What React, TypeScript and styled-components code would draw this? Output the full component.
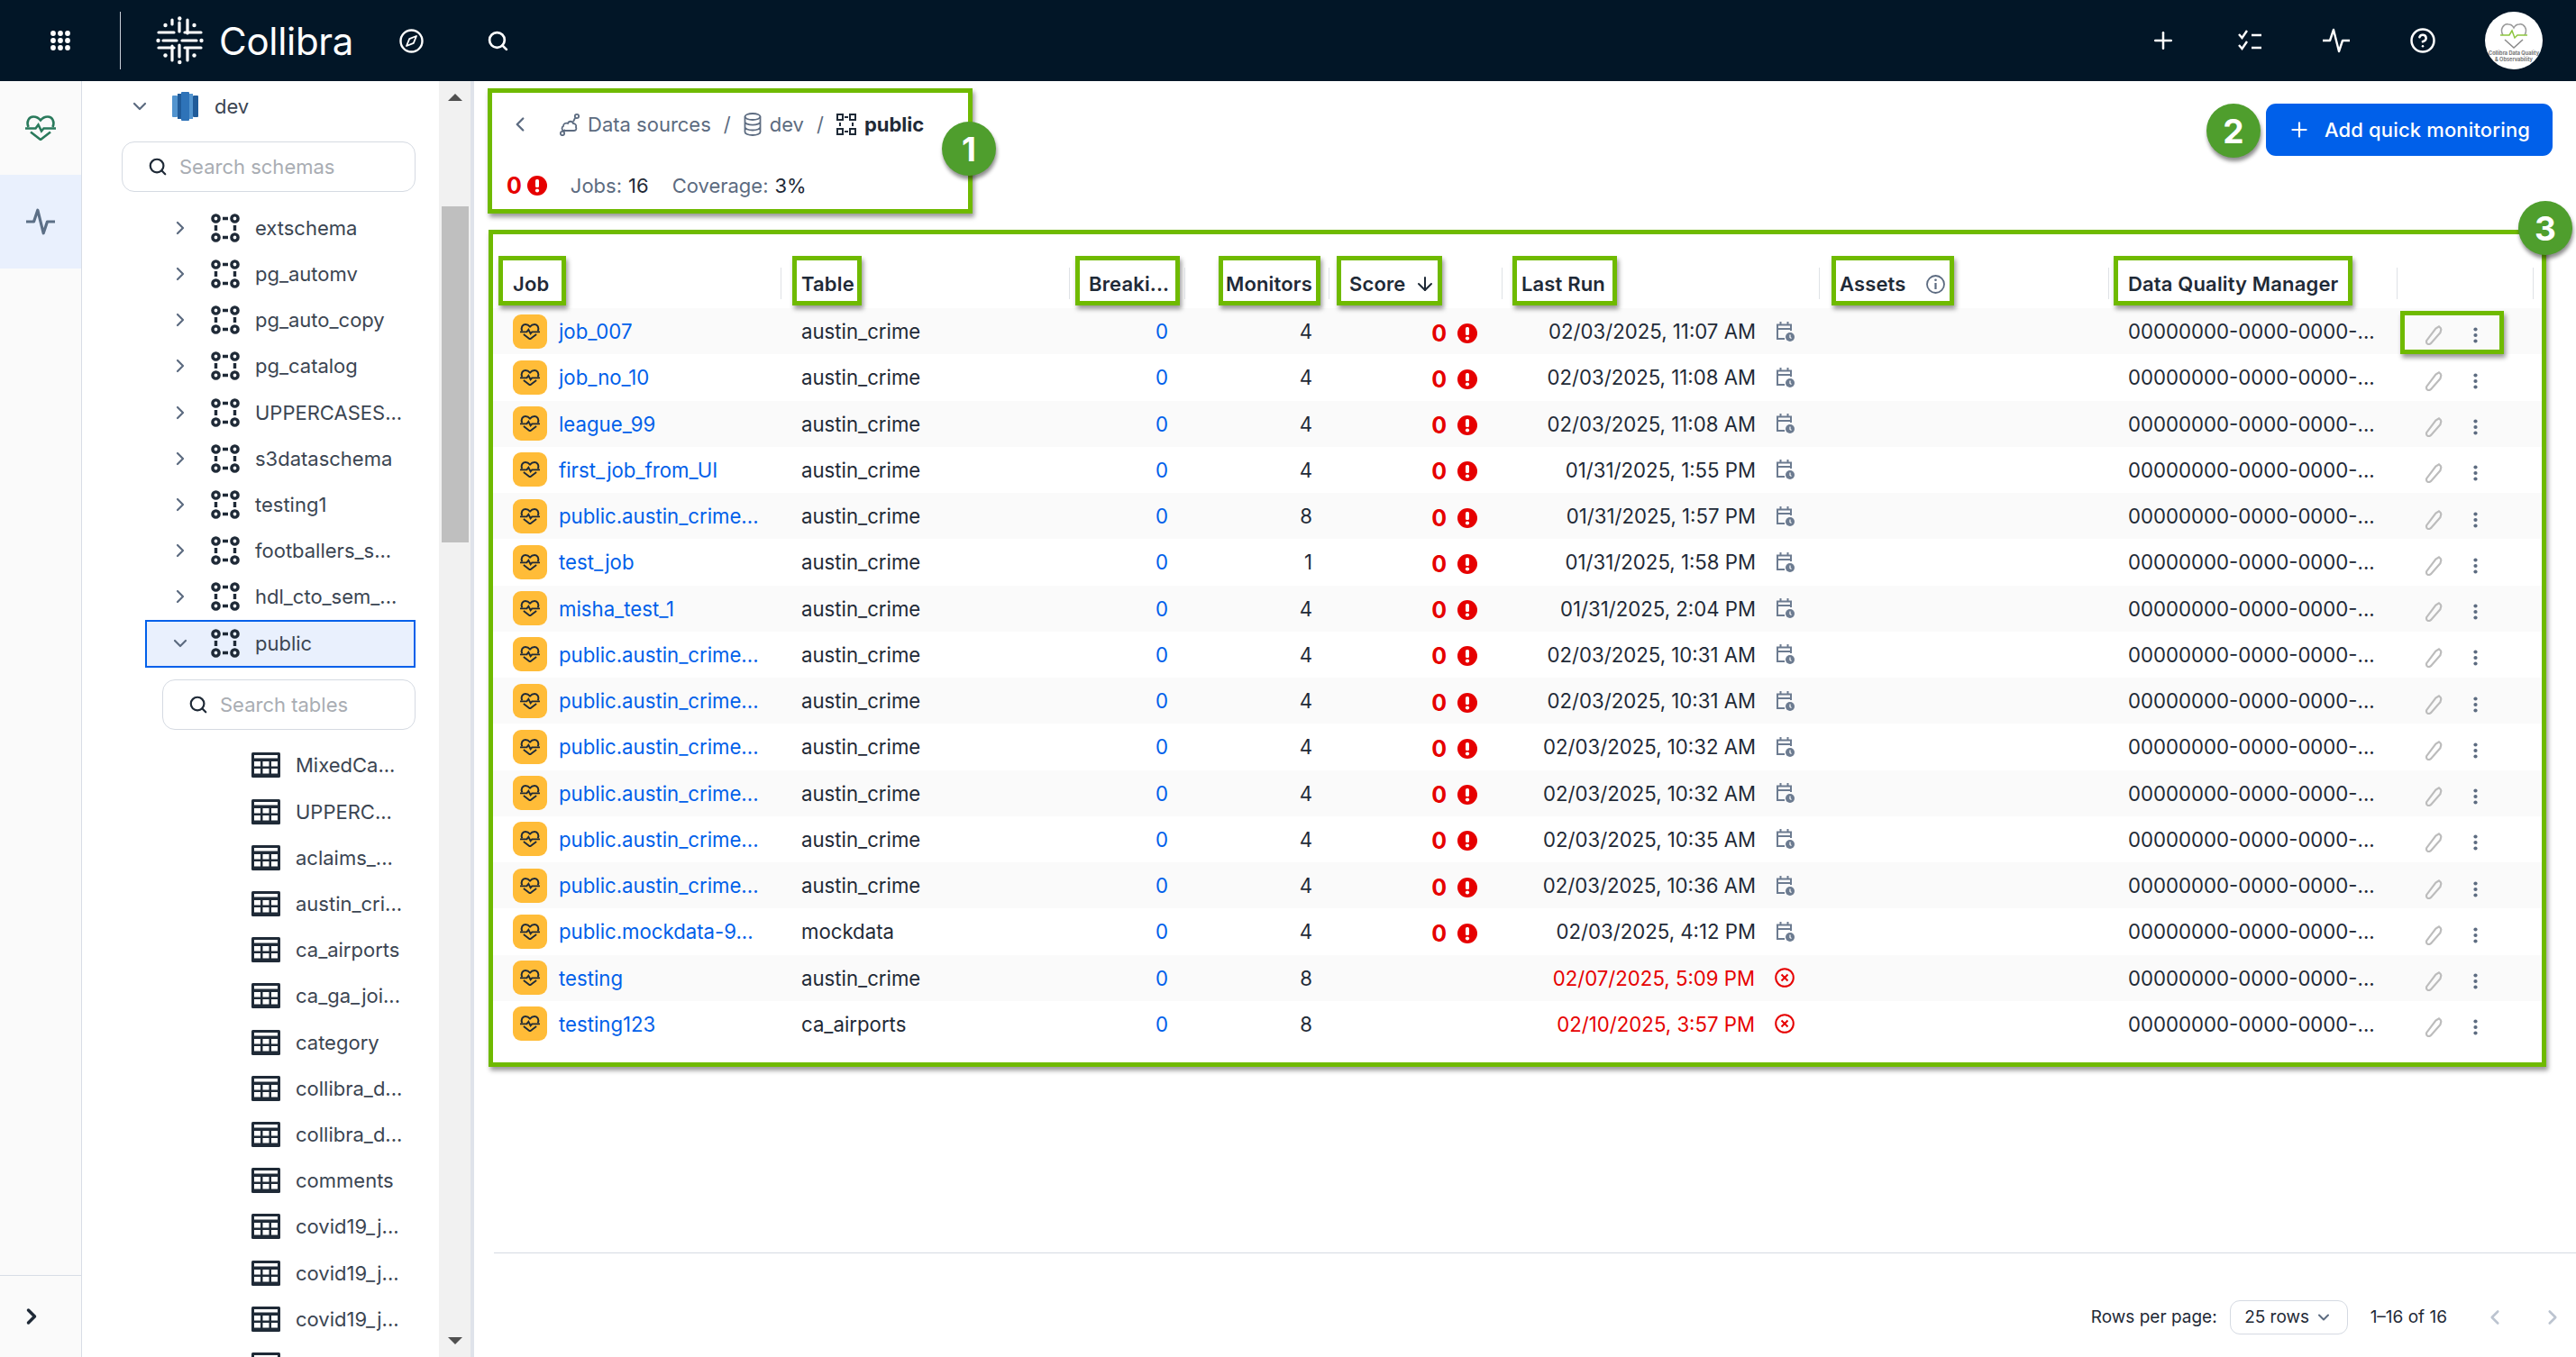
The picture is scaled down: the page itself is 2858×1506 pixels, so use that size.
import React from 'react'
import styled, { createGlobalStyle } from 'styled-components'
import { ChevronDown, ChevronLeft, ChevronRight, Plus, CircleHelp, Search, ArrowDown } from 'lucide-react'

const GREEN = '#6fba00'
const INK = '#1f2a37'
const SLATE = '#5c6b80'
const BLUE = '#0060ea'
const RED = '#e60000'

const GlobalStyle = createGlobalStyle`
  html, body {
    margin: 0;
    padding: 0;
    background: #fff;
  }
  body {
    font-family: Inter, "Liberation Sans", sans-serif;
    font-size: 22px;
    color: ${INK};
  }
  * {
    box-sizing: border-box;
  }
`

const Page = styled.div`
  width: 2858px;
  height: 1506px;
  display: flex;
  flex-direction: column;
  overflow: hidden;
`

const TopBar = styled.header`
  height: 90px;
  flex: none;
  background: #021627;
  color: #fff;
  display: flex;
  align-items: center;
  padding-left: 56px;
  padding-right: 37px;
`

const VDivider = styled.div`
  width: 1px;
  height: 64px;
  background: #c9d0d8;
  margin-left: 55px;
  margin-right: 31px;
`

const Wordmark = styled.span`
  font-size: 42px;
  font-weight: 400;
  margin-left: 8px;
  letter-spacing: -0.3px;
`

const CompassSlot = styled.div`
  margin-left: 51px;
  display: flex;
`

const SearchSlot = styled.div`
  margin-left: 70px;
  display: flex;
`

const TopActions = styled.div`
  margin-left: auto;
  display: flex;
  align-items: center;
`

const TopAction = styled.div`
  width: 96px;
  display: flex;
  justify-content: center;
`

const Avatar = styled.svg`
  margin-left: 21px;
  width: 64px;
  height: 64px;
  display: block;
`

const Body = styled.div`
  flex: 1;
  min-height: 0;
  display: flex;
`

const Rail = styled.nav`
  width: 91px;
  flex: none;
  background: #fafafa;
  border-right: 1px solid #d8dde6;
  display: flex;
  flex-direction: column;
`

const RailItem = styled.div<{ $active?: boolean }>`
  height: 104px;
  display: flex;
  align-items: center;
  justify-content: center;
  color: #2a7a5c;
  background: ${({ $active }) => ($active ? '#e9f0fd' : 'transparent')};
`

const RailFoot = styled.div`
  margin-top: auto;
  height: 91px;
  border-top: 1px solid #d8dde6;
  display: flex;
  align-items: center;
  justify-content: center;
  padding-right: 20px;
  color: ${INK};
`

const TreePanel = styled.aside`
  width: 396px;
  flex: none;
  overflow: hidden;
  padding-top: 2px;
`

const TreeRow = styled.div<{ $indent: number }>`
  height: 51.2px;
  display: flex;
  align-items: center;
  padding-left: ${({ $indent }) => $indent}px;
  font-size: 22px;
  color: #3b4552;
  white-space: nowrap;
`

const SelectedRow = styled.div`
  height: 53px;
  width: 300px;
  margin-left: 70px;
  margin-bottom: -1px;
  padding-left: 17px;
  display: flex;
  align-items: center;
  background: #e9f0fd;
  border: 2px solid ${BLUE};
  font-size: 22px;
  color: #3b4552;
`

const ChevronSlot = styled.span`
  width: 40px;
  margin-right: 14px;
  flex: none;
  display: flex;
  justify-content: center;
  color: ${SLATE};
`

const IconSlot = styled.span`
  width: 32px;
  margin-right: 17px;
  flex: none;
  display: flex;
  justify-content: center;
`

const SearchBox = styled.div<{ $left: number }>`
  height: 56px;
  margin: 14px 26px 14px ${({ $left }) => $left}px;
  border: 1px solid #d5dae2;
  border-radius: 14px;
  display: flex;
  align-items: center;
  padding-left: 28px;
  gap: 13px;
  color: #a9adb3;
  font-size: 22px;
  background: #fff;
  svg {
    color: ${INK};
    flex: none;
  }
`

const ScrollTrack = styled.div`
  width: 35px;
  flex: none;
  background: #f1f1f1;
  display: flex;
  flex-direction: column;
  align-items: center;
`

const ScrollButton = styled.div`
  height: 36px;
  flex: none;
  display: flex;
  align-items: center;
  justify-content: center;
`

const ScrollThumb = styled.div`
  width: 30px;
  height: 373px;
  margin-top: 103px;
  background: #bfbfbf;
`

const ScrollEnd = styled(ScrollButton)`
  margin-top: auto;
`

const Arrow = styled.span<{ $down?: boolean }>`
  width: 0;
  height: 0;
  border-left: 8px solid transparent;
  border-right: 8px solid transparent;
  ${({ $down }) =>
    $down ? 'border-top: 8px solid #505050;' : 'border-bottom: 8px solid #505050;'}
`

const PanelEdge = styled.div`
  width: 4px;
  flex: none;
  background: #dfe3ea;
`

const Main = styled.main`
  flex: 1;
  min-width: 0;
  display: flex;
  flex-direction: column;
`

const HeadRow = styled.div`
  display: flex;
  align-items: flex-start;
  justify-content: space-between;
  padding: 8px 26px 0 15px;
`

const Marked = styled.div`
  position: relative;
  border: 5px solid ${GREEN};
  box-shadow: 2px 4px 5px rgba(0, 0, 0, 0.4);
`

const SummaryBox = styled(Marked)`
  width: 538px;
  height: 139px;
`

const Crumbs = styled.div`
  display: flex;
  align-items: center;
  height: 30px;
  margin-top: 20px;
  padding-left: 18px;
  color: ${SLATE};
  font-size: 22px;
`

const BackSlot = styled.span`
  display: flex;
  margin-right: 31px;
  color: ${SLATE};
`

const CrumbIcon = styled.span`
  display: flex;
  margin-right: 9px;
`

const CrumbSlash = styled.span`
  margin: 0 14px;
`

const CrumbCurrent = styled.span`
  color: ${INK};
  font-weight: 700;
`

const Stats = styled.div`
  display: flex;
  align-items: center;
  height: 30px;
  margin-top: 38px;
  padding-left: 16px;
  font-size: 22px;
`

const ScoreZero = styled.span`
  color: ${RED};
  font-weight: 700;
  font-size: 25px;
  margin-right: 6px;
`

const StatLabel = styled.span<{ $gap: number }>`
  color: ${SLATE};
  margin-left: ${({ $gap }) => $gap}px;
  margin-right: 7px;
`

const Badge = styled.div`
  width: 60px;
  height: 60px;
  border-radius: 50%;
  background: #4f9e2d;
  color: #fff;
  font-size: 37px;
  font-weight: 700;
  display: flex;
  align-items: center;
  justify-content: center;
  box-shadow: 1px 4px 4px rgba(0, 0, 0, 0.45);
`

const OverBadge = styled(Badge)<{ $left: number; $top: number }>`
  position: absolute;
  left: ${({ $left }) => $left}px;
  top: ${({ $top }) => $top}px;
  z-index: 2;
`

const HeadActions = styled.div`
  display: flex;
  align-items: flex-start;
  gap: 6px;
  margin-top: 17px;
`

const PrimaryButton = styled.button`
  width: 318px;
  height: 58px;
  border: 0;
  border-radius: 11px;
  background: ${BLUE};
  color: #fff;
  font-family: inherit;
  font-size: 22px;
  font-weight: 500;
  letter-spacing: 0.15px;
  display: flex;
  align-items: center;
  padding-left: 24px;
  gap: 15px;
`

const TableBox = styled(Marked)`
  width: 2283px;
  height: 929px;
  margin: 18px 0 0 16px;
  padding-top: 22px;
`

const COLUMNS = '319px 320px 128px 160px 192px 352px 321px 320px 152px'

const HeadGrid = styled.div`
  display: grid;
  grid-template-columns: ${COLUMNS};
  height: 60px;
  font-weight: 600;
  font-size: 22px;
  letter-spacing: 0.15px;
  color: ${INK};
`

const HeadCell = styled.div<{ $sep?: boolean; $endSep?: boolean }>`
  position: relative;
  padding-top: 2px;
  ${({ $sep }) =>
    $sep &&
    `&::before {
      content: '';
      position: absolute;
      left: 0;
      top: 15px;
      width: 1px;
      height: 35px;
      background: #dfe2e6;
    }`}
  ${({ $endSep }) =>
    $endSep &&
    `&::after {
      content: '';
      position: absolute;
      right: 0;
      top: 15px;
      width: 1px;
      height: 35px;
      background: #dfe2e6;
    }`}
`

const HeadMark = styled(Marked)<{ $x: number; $w: number; $pad: number }>`
  margin-left: ${({ $x }) => $x}px;
  width: ${({ $w }) => $w}px;
  height: 55px;
  padding-left: ${({ $pad }) => $pad}px;
  padding-top: 7px;
  display: flex;
  align-items: center;
  white-space: nowrap;
`

const HeadAside = styled.span<{ $gap: number }>`
  display: flex;
  margin-left: ${({ $gap }) => $gap}px;
  color: ${INK};
`

const RowGrid = styled.div<{ $odd: boolean }>`
  display: grid;
  grid-template-columns: ${COLUMNS};
  height: 51.25px;
  align-items: center;
  font-size: 22.2px;
  background: ${({ $odd }) => ($odd ? '#fafafa' : '#fff')};
`

const JobCell = styled.div`
  display: flex;
  align-items: center;
  gap: 13px;
  padding-left: 22px;
`

const JobTile = styled.span`
  width: 38px;
  height: 38px;
  flex: none;
  border-radius: 9px;
  background: #ffbc38;
  display: flex;
  align-items: center;
  justify-content: center;
  color: ${INK};
`

const JobLink = styled.a`
  color: ${BLUE};
  white-space: nowrap;
`

const PadCell = styled.div<{ $left: number }>`
  padding-left: ${({ $left }) => $left}px;
  white-space: nowrap;
`

const NumCell = styled.div<{ $right: number; $link?: boolean }>`
  text-align: right;
  padding-right: ${({ $right }) => $right}px;
  color: ${({ $link }) => ($link ? BLUE : INK)};
`

const ScoreCell = styled.div`
  display: flex;
  justify-content: flex-end;
  align-items: center;
  padding-right: 27px;
  padding-top: 4px;
  gap: 6px;
  height: 30px;
`

const RunCell = styled.div<{ $failed: boolean }>`
  display: flex;
  justify-content: flex-end;
  align-items: center;
  gap: 22px;
  padding-right: 27px;
  color: ${({ $failed }) => ($failed ? RED : INK)};
  white-space: nowrap;
`

const ActionsCell = styled.div`
  position: relative;
  height: 100%;
  display: flex;
  align-items: center;
  padding-left: 31px;
  padding-top: 8px;
  gap: 32px;
`

const ActionsMark = styled(Marked)`
  position: absolute;
  left: 4px;
  top: 3px;
  width: 115px;
  height: 48px;
`

const Footer = styled.footer`
  margin-top: auto;
  margin-left: 22px;
  height: 116px;
  flex: none;
  border-top: 1px solid #d5dae2;
  display: flex;
  align-items: center;
  justify-content: flex-end;
  padding-top: 26px;
  padding-right: 2px;
  font-size: 19px;
`

const RowsSelect = styled.div`
  width: 131px;
  height: 38px;
  margin-left: 14px;
  border: 1px solid #d5dae2;
  border-radius: 11px;
  display: flex;
  align-items: center;
  justify-content: center;
  gap: 6px;
  color: ${SLATE};
`

const SelectText = styled.span`
  color: ${INK};
`

const Range = styled.span`
  margin-left: 25px;
  margin-right: 29px;
`

const PagerSlot = styled.span`
  display: flex;
  color: #bcc4d0;
  width: 48px;
  justify-content: center;
  & + & {
    margin-left: 16px;
  }
`

const DotsIcon = () => (
  <svg width="22" height="22" viewBox="0 0 22 22" fill="#fff">
    {[3, 11, 19].flatMap((y) =>
      [3, 11, 19].map((x) => <circle key={`${x}-${y}`} cx={x} cy={y} r="2.9" />),
    )}
  </svg>
)

const LOGO_BARS = [
  'M16 33H31',
  'M37 33H53',
  'M11 24H28',
  'M40 24H58',
  'M11 41H28',
  'M40 41H58',
  'M34 13V23',
  'M26 10V15',
  'M43 10V25',
  'M26 39V55',
  'M34 38V51',
  'M43 42V55',
]

const LogoIcon = () => (
  <svg width="70" height="66" viewBox="0 0 70 66" stroke="#fff" strokeWidth="3.2" strokeLinecap="round" fill="none">
    {LOGO_BARS.map((d) => (
      <path key={d} d={d} />
    ))}
    <g fill="#fff" stroke="none">
      <circle cx="10.5" cy="33" r="2.2" />
      <circle cx="58.5" cy="33" r="2.2" />
      <circle cx="34.3" cy="8.5" r="2.2" />
      <circle cx="34.3" cy="57" r="2.2" />
      <circle cx="18.5" cy="16" r="2.2" />
      <circle cx="50.5" cy="16" r="2.2" />
      <circle cx="18.5" cy="49.5" r="2.2" />
      <circle cx="50.5" cy="49.5" r="2.2" />
    </g>
  </svg>
)

const CompassIcon = () => (
  <svg width="27" height="27" viewBox="0 0 27 27" fill="none" stroke="#fff" strokeWidth="2.4">
    <circle cx="13.5" cy="13.5" r="12" />
    <path d="M19 8l-3.2 7.8L8 19l3.2-7.8z" strokeWidth="1.8" strokeLinejoin="round" />
  </svg>
)

const ChecksIcon = () => (
  <svg width="26" height="26" viewBox="0 0 26 26" fill="none" stroke="#fff" strokeWidth="2.4">
    <path d="M1 6l3.5 4L10 2M1 18l3.5 4L10 14M15 7h11M15 21h11" />
  </svg>
)

const PulseIcon = ({ size, color, width = 2.4 }: { size: number; color: string; width?: number }) => (
  <svg width={size} height={size} viewBox="0 0 30 30" fill="none" stroke={color} strokeWidth={width}>
    <path d="M0 15h8l4-12 6 24 4-12h8" strokeLinejoin="round" />
  </svg>
)

const HeartIcon = ({ width, stroke = 2.6 }: { width: number; stroke?: number }) => (
  <svg width={width} height={(width * 28) / 34} viewBox="0 0 34 28" fill="none" stroke="currentColor" strokeWidth={stroke}>
    <path d="M3.500 13C1 7 4 1.500 9 1.500c3 0 6 1.500 8 4 2-2.500 5-4 8-4 5 0 8 5.500 5.500 11.500" />
    <path d="M0 14.500h11.500l3-4 3.500 7 2.500-3h13.500" />
    <path d="M6 18.500l11 8.500 11-8.500" />
  </svg>
)

const RedshiftIcon = () => (
  <svg width="29" height="32" viewBox="0 0 29 32">
    <rect x="0" y="4" width="6" height="24" rx="1" fill="#5294cf" />
    <rect x="23" y="4" width="6" height="24" rx="1" fill="#205b99" />
    <rect x="6" y="2" width="4" height="28" fill="#205b99" />
    <rect x="19" y="2" width="4" height="28" fill="#5294cf" />
    <rect x="10" y="0" width="9" height="32" rx="1" fill="#2e73b8" />
  </svg>
)

const SchemaIcon = () => (
  <svg width="32" height="32" viewBox="0 0 32 32" fill="none" stroke="#1f2a37" strokeWidth="3.4">
    <circle cx="5.500" cy="5.500" r="3.600" />
    <circle cx="26.500" cy="5.500" r="3.600" />
    <circle cx="5.500" cy="26.500" r="3.600" />
    <circle cx="26.500" cy="26.500" r="3.600" />
    <path d="M13 5.500h6M13 26.500h6M5.500 13v6M26.500 13v6" />
  </svg>
)

const CrumbSchemaIcon = () => (
  <svg width="22" height="24" viewBox="0 0 22 24" fill="none" stroke="#1f2a37" strokeWidth="2">
    <rect x="1" y="1" width="6" height="6" />
    <rect x="15" y="1" width="6" height="6" />
    <rect x="1" y="17" width="6" height="6" />
    <rect x="15" y="17" width="6" height="6" />
    <path d="M9 4h4M9 20h4M4 10v4M18 10v4" />
  </svg>
)

const TableIcon = () => (
  <svg width="32" height="28" viewBox="0 0 32 28">
    <rect width="32" height="28" rx="1.500" fill="#1f2a37" />
    <rect x="3" y="3" width="26" height="3.500" fill="#fff" />
    {[10, 18].flatMap((y) =>
      [3, 12.500, 22].map((x) => <rect key={`${x}-${y}`} x={x} y={y} width="7" height="5.500" fill="#fff" />),
    )}
  </svg>
)

const ErrorIcon = () => (
  <svg width="22" height="22" viewBox="0 0 22 22">
    <circle cx="11" cy="11" r="11" fill={RED} />
    <rect x="9" y="4" width="4" height="9" rx="1.500" fill="#fff" />
    <circle cx="11" cy="16.500" r="2.100" fill="#fff" />
  </svg>
)

const FailedIcon = () => (
  <svg width="22" height="22" viewBox="0 0 22 22" fill="none" stroke={RED} strokeWidth="2">
    <circle cx="11" cy="11" r="9.800" />
    <path d="M7.500 7.500l7 7M14.500 7.500l-7 7" />
  </svg>
)

const CalendarIcon = () => (
  <svg width="21" height="22" viewBox="0 0 21 22" fill="none" stroke="#6c7b90" strokeWidth="2">
    <path d="M10 19H2V3.500h15V10M2 8h15M5.500 0v4M13.500 0v4" />
    <circle cx="16" cy="17" r="5" fill="#6c7b90" stroke="none" />
    <path d="M16 14.500V17.500l1.500 1" stroke="#fff" strokeWidth="1.200" />
  </svg>
)

const PencilIcon = () => (
  <svg width="22" height="22" viewBox="0 0 22 24" fill="none" stroke="#bcbcbc" strokeWidth="2.400">
    <path d="M2.500 22.500c-1.500-1-1.500-2.500-1-4L12.500 4 16.500 1.500c1.500 1 2.500 2 2.500 3.500L18 9 6.500 22c-1.200 1-2.700 1.300-4 .5z" />
  </svg>
)

const KebabIcon = () => (
  <svg width="5" height="18" viewBox="0 0 5 18" fill={SLATE}>
    <circle cx="2.500" cy="2.500" r="2.100" />
    <circle cx="2.500" cy="9" r="2.100" />
    <circle cx="2.500" cy="15.500" r="2.100" />
  </svg>
)

const InfoIcon = () => (
  <svg width="21" height="21" viewBox="0 0 21 21" fill="none" stroke={SLATE} strokeWidth="1.800">
    <circle cx="10.500" cy="10.500" r="9.500" />
    <path d="M10.500 9v7" strokeWidth="2.200" />
    <circle cx="10.500" cy="5.800" r="1.300" fill={SLATE} stroke="none" />
  </svg>
)

const SourceIcon = () => (
  <svg width="22" height="26" viewBox="0 0 22 26" fill="none" stroke={SLATE} strokeWidth="1.800">
    <path d="M4 20c-2-1-2-4 0-5 0-3 3-4 5-3 1-3 5-3 6 0 2 0 4 2 3 4 1 2 0 4-2 4z" />
    <circle cx="19" cy="4" r="2.200" />
    <circle cx="3" cy="23" r="2.200" />
    <path d="M17 6l-2 4M4 21l2-2" />
  </svg>
)

const DatabaseIcon = () => (
  <svg width="20" height="26" viewBox="0 0 20 26" fill="none" stroke={SLATE} strokeWidth="1.800">
    <ellipse cx="10" cy="4.500" rx="8.500" ry="3.500" />
    <path d="M1.500 4.500v17c0 2 3.800 3.500 8.500 3.500s8.500-1.500 8.500-3.500v-17M1.500 10.200c0 2 3.800 3.500 8.500 3.500s8.500-1.500 8.500-3.500M1.500 16c0 2 3.800 3.500 8.500 3.500s8.500-1.500 8.500-3.500" />
  </svg>
)

const HEAD = [
  { label: 'Job', x: 6, w: 75, pad: 11 },
  { label: 'Table', x: 13, w: 77, pad: 5, sep: true },
  { label: 'Breaki...', x: 7, w: 116, pad: 10, sep: true },
  { label: 'Monitors', x: 38, w: 113, pad: 3, sep: true },
  { label: 'Score', x: 9, w: 117, pad: 9, sep: true, aside: 'arrow' },
  { label: 'Last Run', x: 12, w: 116, pad: 5, sep: true },
  { label: 'Assets', x: 14, w: 136, pad: 4, sep: true, aside: 'info' },
  { label: 'Data Quality Manager', x: 6, w: 265, pad: 11, sep: true },
]

const LONG_JOB = 'public.austin_crime...'

const JOBS = [
  { job: 'job_007', table: 'austin_crime', monitors: 4, run: '02/03/2025, 11:07 AM' },
  { job: 'job_no_10', table: 'austin_crime', monitors: 4, run: '02/03/2025, 11:08 AM' },
  { job: 'league_99', table: 'austin_crime', monitors: 4, run: '02/03/2025, 11:08 AM' },
  { job: 'first_job_from_UI', table: 'austin_crime', monitors: 4, run: '01/31/2025, 1:55 PM' },
  { job: LONG_JOB, table: 'austin_crime', monitors: 8, run: '01/31/2025, 1:57 PM' },
  { job: 'test_job', table: 'austin_crime', monitors: 1, run: '01/31/2025, 1:58 PM' },
  { job: 'misha_test_1', table: 'austin_crime', monitors: 4, run: '01/31/2025, 2:04 PM' },
  { job: LONG_JOB, table: 'austin_crime', monitors: 4, run: '02/03/2025, 10:31 AM' },
  { job: LONG_JOB, table: 'austin_crime', monitors: 4, run: '02/03/2025, 10:31 AM' },
  { job: LONG_JOB, table: 'austin_crime', monitors: 4, run: '02/03/2025, 10:32 AM' },
  { job: LONG_JOB, table: 'austin_crime', monitors: 4, run: '02/03/2025, 10:32 AM' },
  { job: LONG_JOB, table: 'austin_crime', monitors: 4, run: '02/03/2025, 10:35 AM' },
  { job: LONG_JOB, table: 'austin_crime', monitors: 4, run: '02/03/2025, 10:36 AM' },
  { job: 'public.mockdata-9...', table: 'mockdata', monitors: 4, run: '02/03/2025, 4:12 PM' },
  { job: 'testing', table: 'austin_crime', monitors: 8, run: '02/07/2025, 5:09 PM', failed: true },
  { job: 'testing123', table: 'ca_airports', monitors: 8, run: '02/10/2025, 3:57 PM', failed: true },
]

const SCHEMAS = ['extschema', 'pg_automv', 'pg_auto_copy', 'pg_catalog', 'UPPERCASES...', 's3dataschema', 'testing1', 'footballers_s...', 'hdl_cto_sem_...']

const TABLES = [
  'MixedCa...',
  'UPPERC...',
  'aclaims_...',
  'austin_cri...',
  'ca_airports',
  'ca_ga_joi...',
  'category',
  'collibra_d...',
  'collibra_d...',
  'comments',
  'covid19_j...',
  'covid19_j...',
  'covid19_j...',
]

export default function App() {
  return (
    <Page>
      <GlobalStyle />
      <TopBar>
        <DotsIcon />
        <VDivider />
        <LogoIcon />
        <Wordmark>Collibra</Wordmark>
        <CompassSlot>
          <CompassIcon />
        </CompassSlot>
        <SearchSlot>
          <Search size={25} strokeWidth={2.6} />
        </SearchSlot>
        <TopActions>
          <TopAction>
            <Plus size={30} strokeWidth={2} />
          </TopAction>
          <TopAction>
            <ChecksIcon />
          </TopAction>
          <TopAction>
            <PulseIcon size={30} color="#fff" />
          </TopAction>
          <TopAction>
            <CircleHelp size={30} strokeWidth={2} />
          </TopAction>
          <Avatar viewBox="0 0 64 64">
            <circle cx="32" cy="32" r="32" fill="#fff" />
            <path d="M20 26c-4-7 1-13 6-12 3 0 5 2 6 4 1-2 3-4 6-4 5-1 10 5 6 12" fill="none" stroke="#9a9a9a" strokeWidth="1.500" />
            <path d="M17 26h10l3-5 3 8 3-3h11" fill="none" stroke="#8dc63f" strokeWidth="1.500" />
            <path d="M22 31l10 9 10-9" fill="none" stroke="#8a8a8a" strokeWidth="1.500" />
            <text x="32" y="48" textAnchor="middle" fontSize="5.600" fontWeight="700" fill="#777">
              Collibra Data Quality
            </text>
            <text x="32" y="55" textAnchor="middle" fontSize="5.600" fontWeight="700" fill="#777">
              &amp; Observability
            </text>
          </Avatar>
        </TopActions>
      </TopBar>
      <Body>
        <Rail>
          <RailItem>
            <HeartIcon width={34} />
          </RailItem>
          <RailItem $active>
            <PulseIcon size={32} color="#5c6f86" width={3} />
          </RailItem>
          <RailFoot>
            <ChevronRight size={28} strokeWidth={3} />
          </RailFoot>
        </Rail>
        <TreePanel>
          <TreeRow $indent={44}>
            <ChevronSlot>
              <ChevronDown size={24} strokeWidth={2.2} />
            </ChevronSlot>
            <IconSlot>
              <RedshiftIcon />
            </IconSlot>
            dev
          </TreeRow>
          <SearchBox $left={44}>
            <Search size={22} strokeWidth={2.4} />
            Search schemas
          </SearchBox>
          {SCHEMAS.map((name) => (
            <TreeRow key={name} $indent={89}>
              <ChevronSlot>
                <ChevronRight size={24} strokeWidth={2.2} />
              </ChevronSlot>
              <IconSlot>
                <SchemaIcon />
              </IconSlot>
              {name}
            </TreeRow>
          ))}
          <SelectedRow>
            <ChevronSlot>
              <ChevronDown size={24} strokeWidth={2.2} />
            </ChevronSlot>
            <IconSlot>
              <SchemaIcon />
            </IconSlot>
            public
          </SelectedRow>
          <SearchBox $left={89}>
            <Search size={22} strokeWidth={2.4} />
            Search tables
          </SearchBox>
          {TABLES.map((name, i) => (
            <TreeRow key={`${name}-${i}`} $indent={188}>
              <IconSlot>
                <TableIcon />
              </IconSlot>
              {name}
            </TreeRow>
          ))}
          <TreeRow $indent={188}>
            <IconSlot>
              <TableIcon />
            </IconSlot>
          </TreeRow>
        </TreePanel>
        <ScrollTrack>
          <ScrollButton>
            <Arrow />
          </ScrollButton>
          <ScrollThumb />
          <ScrollEnd>
            <Arrow $down />
          </ScrollEnd>
        </ScrollTrack>
        <PanelEdge />
        <Main>
          <HeadRow>
            <SummaryBox>
              <Crumbs>
                <BackSlot>
                  <ChevronLeft size={26} strokeWidth={2.2} />
                </BackSlot>
                <CrumbIcon>
                  <SourceIcon />
                </CrumbIcon>
                Data sources
                <CrumbSlash>/</CrumbSlash>
                <CrumbIcon>
                  <DatabaseIcon />
                </CrumbIcon>
                dev
                <CrumbSlash>/</CrumbSlash>
                <CrumbIcon>
                  <CrumbSchemaIcon />
                </CrumbIcon>
                <CrumbCurrent>public</CrumbCurrent>
              </Crumbs>
              <Stats>
                <ScoreZero>0</ScoreZero>
                <ErrorIcon />
                <StatLabel $gap={26}>Jobs:</StatLabel>
                16
                <StatLabel $gap={26}>Coverage:</StatLabel>
                3%
              </Stats>
              <OverBadge $left={499} $top={32}>1</OverBadge>
            </SummaryBox>
            <HeadActions>
              <Badge>2</Badge>
              <PrimaryButton>
                <Plus size={26} strokeWidth={2} />
                Add quick monitoring
              </PrimaryButton>
            </HeadActions>
          </HeadRow>
          <TableBox>
            <OverBadge $left={2247} $top={-37}>3</OverBadge>
            <HeadGrid>
              {HEAD.map((col) => (
                <HeadCell key={col.label} $sep={col.sep}>
                  <HeadMark $x={col.x} $w={col.w} $pad={col.pad}>
                    {col.label}
                    {col.aside === 'arrow' && (
                      <HeadAside $gap={9}>
                        <ArrowDown size={24} strokeWidth={2} />
                      </HeadAside>
                    )}
                    {col.aside === 'info' && (
                      <HeadAside $gap={22}>
                        <InfoIcon />
                      </HeadAside>
                    )}
                  </HeadMark>
                </HeadCell>
              ))}
              <HeadCell $sep $endSep />
            </HeadGrid>
            {JOBS.map((row, i) => (
              <RowGrid key={`${row.job}-${i}`} $odd={i % 2 === 0}>
                <JobCell>
                  <JobTile>
                    <HeartIcon width={22} stroke={3} />
                  </JobTile>
                  <JobLink>{row.job}</JobLink>
                </JobCell>
                <PadCell $left={23}>{row.table}</PadCell>
                <NumCell $right={18} $link>
                  0
                </NumCell>
                <NumCell $right={18}>{row.monitors}</NumCell>
                <ScoreCell>
                  {!row.failed && (
                    <>
                      <ScoreZero>0</ScoreZero>
                      <ErrorIcon />
                    </>
                  )}
                </ScoreCell>
                <RunCell $failed={!!row.failed}>
                  {row.run}
                  {row.failed ? <FailedIcon /> : <CalendarIcon />}
                </RunCell>
                <div />
                <PadCell $left={22}>00000000-0000-0000-...</PadCell>
                <ActionsCell>
                  {i === 0 && <ActionsMark />}
                  <PencilIcon />
                  <KebabIcon />
                </ActionsCell>
              </RowGrid>
            ))}
          </TableBox>
          <Footer>
            Rows per page:
            <RowsSelect>
              <SelectText>25 rows</SelectText>
              <ChevronDown size={20} strokeWidth={2.4} />
            </RowsSelect>
            <Range>1–16 of 16</Range>
            <PagerSlot>
              <ChevronLeft size={26} strokeWidth={2.4} />
            </PagerSlot>
            <PagerSlot>
              <ChevronRight size={26} strokeWidth={2.4} />
            </PagerSlot>
          </Footer>
        </Main>
      </Body>
    </Page>
  )
}
